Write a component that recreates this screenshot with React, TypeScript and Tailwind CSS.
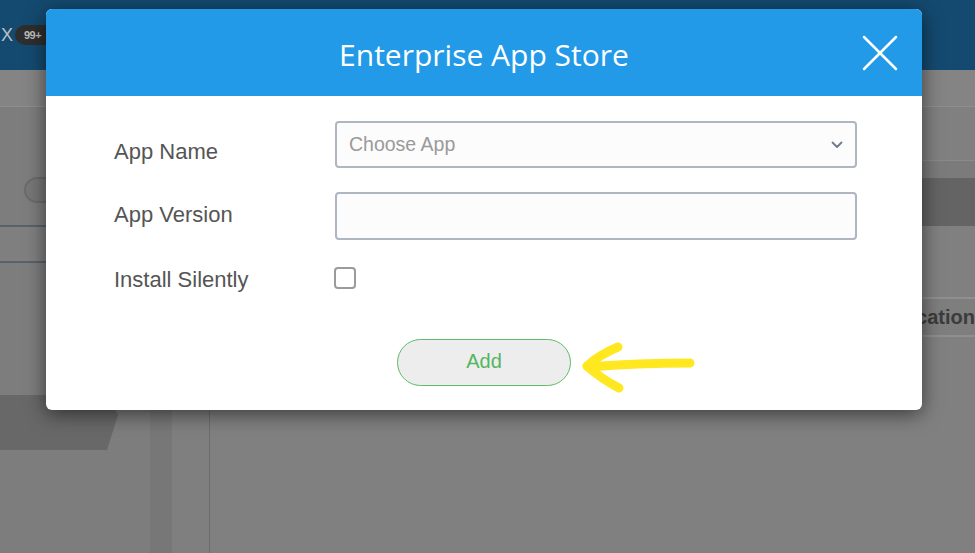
import React from "react";

// Modal "Enterprise App Store" shown over a dimmed admin console
function ArrowMark() {
  return (
    <svg
      className="absolute left-[575px] top-[338px]"
      width="125"
      height="60"
      viewBox="0 0 125 60"
      fill="none"
      stroke="#ffe81f"
      strokeWidth="9"
      strokeLinecap="round"
      strokeLinejoin="round"
    >
      <path d="M115 25 Q 62 25 13 29" />
      <path d="M43 9 Q 24 17 12 28" />
      <path d="M12 28 Q 25 40 44 50" />
    </svg>
  );
}

function Backdrop() {
  return (
    <div className="flex h-full flex-col">
      {/* top bar */}
      <div className="flex h-[70px] items-center bg-[#144a70]">
        <span className="ml-[1px] text-[18px] leading-none text-[#b9c0c6]">X</span>
        <span className="ml-[2px] flex h-[20px] w-[40px] items-center rounded-full bg-[#2e2e2e] pl-[9px] text-[11px] font-bold tracking-tighter text-[#bdbdbd]">
          99+
        </span>
      </div>

      <div className="flex flex-1">
        {/* sidebar */}
        <aside className="flex w-[150px] flex-col bg-[#7d7d7d]">
          <div className="h-[37px] border-b border-[#8e8e8e] bg-[#848484]" />
          <div className="h-[48px]" />
          <div className="flex h-[70px] items-center pl-[24px]">
            <div className="h-[26px] w-[40px] rounded-full border-2 border-[#6b6b6b] bg-[#777]" />
          </div>
          <div className="h-[38px] border-y-2 border-[#59616a] bg-[#7f7f7f]" />
          <div className="h-[132px]" />
          <div className="h-[55px] w-[118px] bg-[#686868] [clip-path:polygon(0_0,107px_0,118px_20px,107px_100%,0_100%)]" />
        </aside>

        <div className="w-[22px] bg-[#777]" />
        <div className="w-[38px] border-r border-[#6c6c6c] bg-[#7f7f7f]" />

        {/* main content */}
        <main className="flex flex-1 flex-col bg-[#808080]">
          <div className="h-[37px] border-b border-[#8e8e8e] bg-[#848484]" />
          <div className="h-[53px]" />
          <div className="h-[18px] border-t border-[#8a8a8a] bg-[#7b7b7b]" />
          <div className="h-[48px] bg-[#646464]" />
          <div className="h-[71px]" />
          <div className="flex h-[40px] items-center justify-end border-y-2 border-[#8f8f8f] bg-[#7e7e7e]">
            <span className="text-[20px] font-bold text-[#3b3b3b]">Application</span>
          </div>
        </main>
      </div>
    </div>
  );
}

export default function App() {
  return (
    <div className="relative h-[553px] w-[975px] overflow-hidden bg-[#7f7f7f] font-['Liberation_Sans',Arial,sans-serif]">
      <Backdrop />

      <div className="absolute left-[46px] top-[9px] flex h-[401px] w-[876px] flex-col overflow-hidden rounded-[6px] bg-white shadow-[0_4px_20px_rgba(0,0,0,0.55)]">
        <div className="relative flex h-[87px] shrink-0 items-center justify-center bg-[#229ae8] pt-[3px]">
          <h1 className="font-['Open_Sans',sans-serif] text-[30px] font-medium text-white">Enterprise App Store</h1>
          <button className="absolute right-[24px] top-[26px] h-[36px] w-[36px]" aria-label="Close">
            <svg viewBox="0 0 36 36" width="36" height="36" stroke="#ffffff" strokeWidth="2.5" strokeLinecap="round">
              <path d="M2 2 L34 34 M34 2 L2 34" />
            </svg>
          </button>
        </div>

        <div className="flex flex-col pl-[68px] pt-[25px]">
          <div className="flex h-[47px]">
            <label className="mt-[20px] w-[221px] text-[22px] leading-[22px] text-[#555]">App Name</label>
            <div className="flex h-[47px] w-[522px] items-center justify-between rounded-[4px] border-2 border-[#aeb6c2] bg-[#fcfcfc] pl-[12px] pr-[12px]">
              <span className="text-[19.5px] text-[#9a9a9a]">Choose App</span>
              <svg width="12" height="8" viewBox="0 0 12 8" fill="none" stroke="#6f7b88" strokeWidth="1.8" strokeLinecap="round" strokeLinejoin="round">
                <path d="M1.5 1.5 L6 6 L10.5 1.5" />
              </svg>
            </div>
          </div>

          <div className="mt-[24px] flex h-[48px]">
            <label className="mt-[12px] w-[221px] text-[22px] leading-[22px] text-[#555]">App Version</label>
            <div className="h-[48px] w-[522px] rounded-[4px] border-2 border-[#aeb6c2] bg-[#fcfcfc]" />
          </div>

          <div className="mt-[27px] flex h-[22px]">
            <label className="mt-[2px] w-[220px] text-[22px] leading-[22px] text-[#555]">Install Silently</label>
            <div className="h-[22px] w-[22px] rounded-[4px] border-2 border-[#9d9a98] bg-white" />
          </div>
        </div>

        <div className="mt-[50px] flex justify-center">
          <button className="h-[47px] w-[174px] rounded-full border-[1.5px] border-[#5cbd68] bg-[#ededed] pb-[4px] text-[20px] text-[#55b562]">
            Add
          </button>
        </div>
      </div>

      <ArrowMark />
    </div>
  );
}
